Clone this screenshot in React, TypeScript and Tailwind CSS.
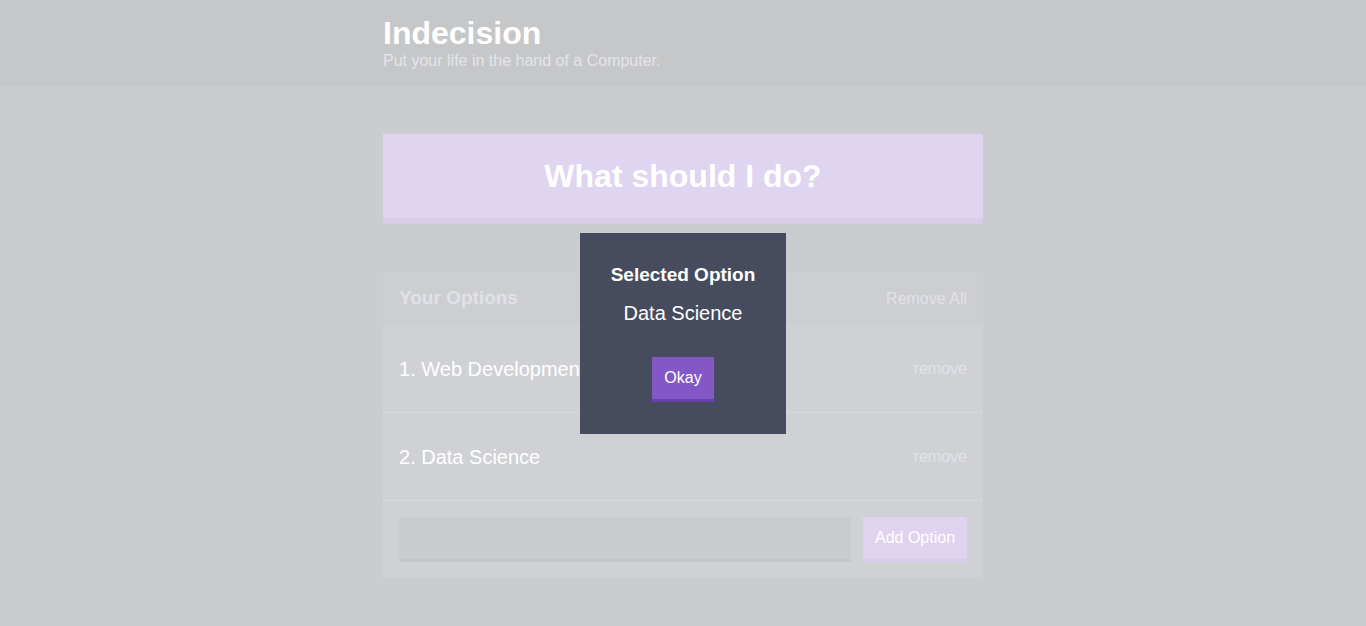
export default function App() {
  const options = ["Web Development", "Data Science"];

  return (
    <div className="relative min-h-[626px] bg-[#cbccd0] font-['Liberation_Sans',Arial,sans-serif]">
      {/* header */}
      <header className="h-[86px] bg-[#c6c7c9] pt-[15px]">
        <div className="mx-auto w-[600px]">
          <h1 className="text-[32px] font-bold leading-[36px] text-white">Indecision</h1>
          <p className="text-[16px] leading-[19px] text-[#e4e4eb]">Put your life in the hand of a Computer.</p>
        </div>
      </header>

      <main className="mx-auto w-[600px] pt-[48px]">
        <button className="block h-[90px] w-full border-b-[6px] border-[#d9cdea] bg-[#e0d5f0] text-[32px] font-bold text-white">
          What should I do?
        </button>

        <div className="mt-[48px] bg-[#d0d1d5]">
          <div className="flex h-[53px] items-center justify-between bg-[#cdced2] px-4">
            <h3 className="text-[19px] font-bold text-[#e1e2e9]">Your Options</h3>
            <button className="text-[16px] text-[#e1e2e9]">Remove All</button>
          </div>

          {options.map((opt, i) => (
            <div
              key={opt}
              className="flex h-[88px] items-center justify-between border-b border-[#d8d9dc] px-4"
            >
              <p className="text-[20px] text-white">
                {i + 1}. {opt}
              </p>
              <button className="text-[16px] text-[#e1e2e9]">remove</button>
            </div>
          ))}

          <form className="flex gap-3 px-4 pb-[15px] pt-[16px]">
            <input className="h-[45px] flex-1 border-b-[3px] border-[#c5c6ca] bg-[#cbccd0] outline-none" />
            <button
              type="button"
              className="h-[45px] w-[104px] border-b-[3px] border-[#d9cdea] bg-[#dfd3ef] text-[16px] text-white"
            >
              Add Option
            </button>
          </form>
        </div>
      </main>

      {/* modal */}
      <div className="absolute left-1/2 top-[233px] flex h-[201px] w-[206px] -translate-x-1/2 flex-col items-center bg-[#464b5e] pt-[31px] text-white">
        <h3 className="text-[19px] font-bold leading-[22px]">Selected Option</h3>
        <p className="mt-[16px] text-[20px] leading-[23px]">Data Science</p>
        <button className="mt-[32px] h-[45px] w-[62px] border-b-[3px] border-[#6a3fae] bg-[#8357c5] text-[16px] text-white">
          Okay
        </button>
      </div>
    </div>
  );
}
